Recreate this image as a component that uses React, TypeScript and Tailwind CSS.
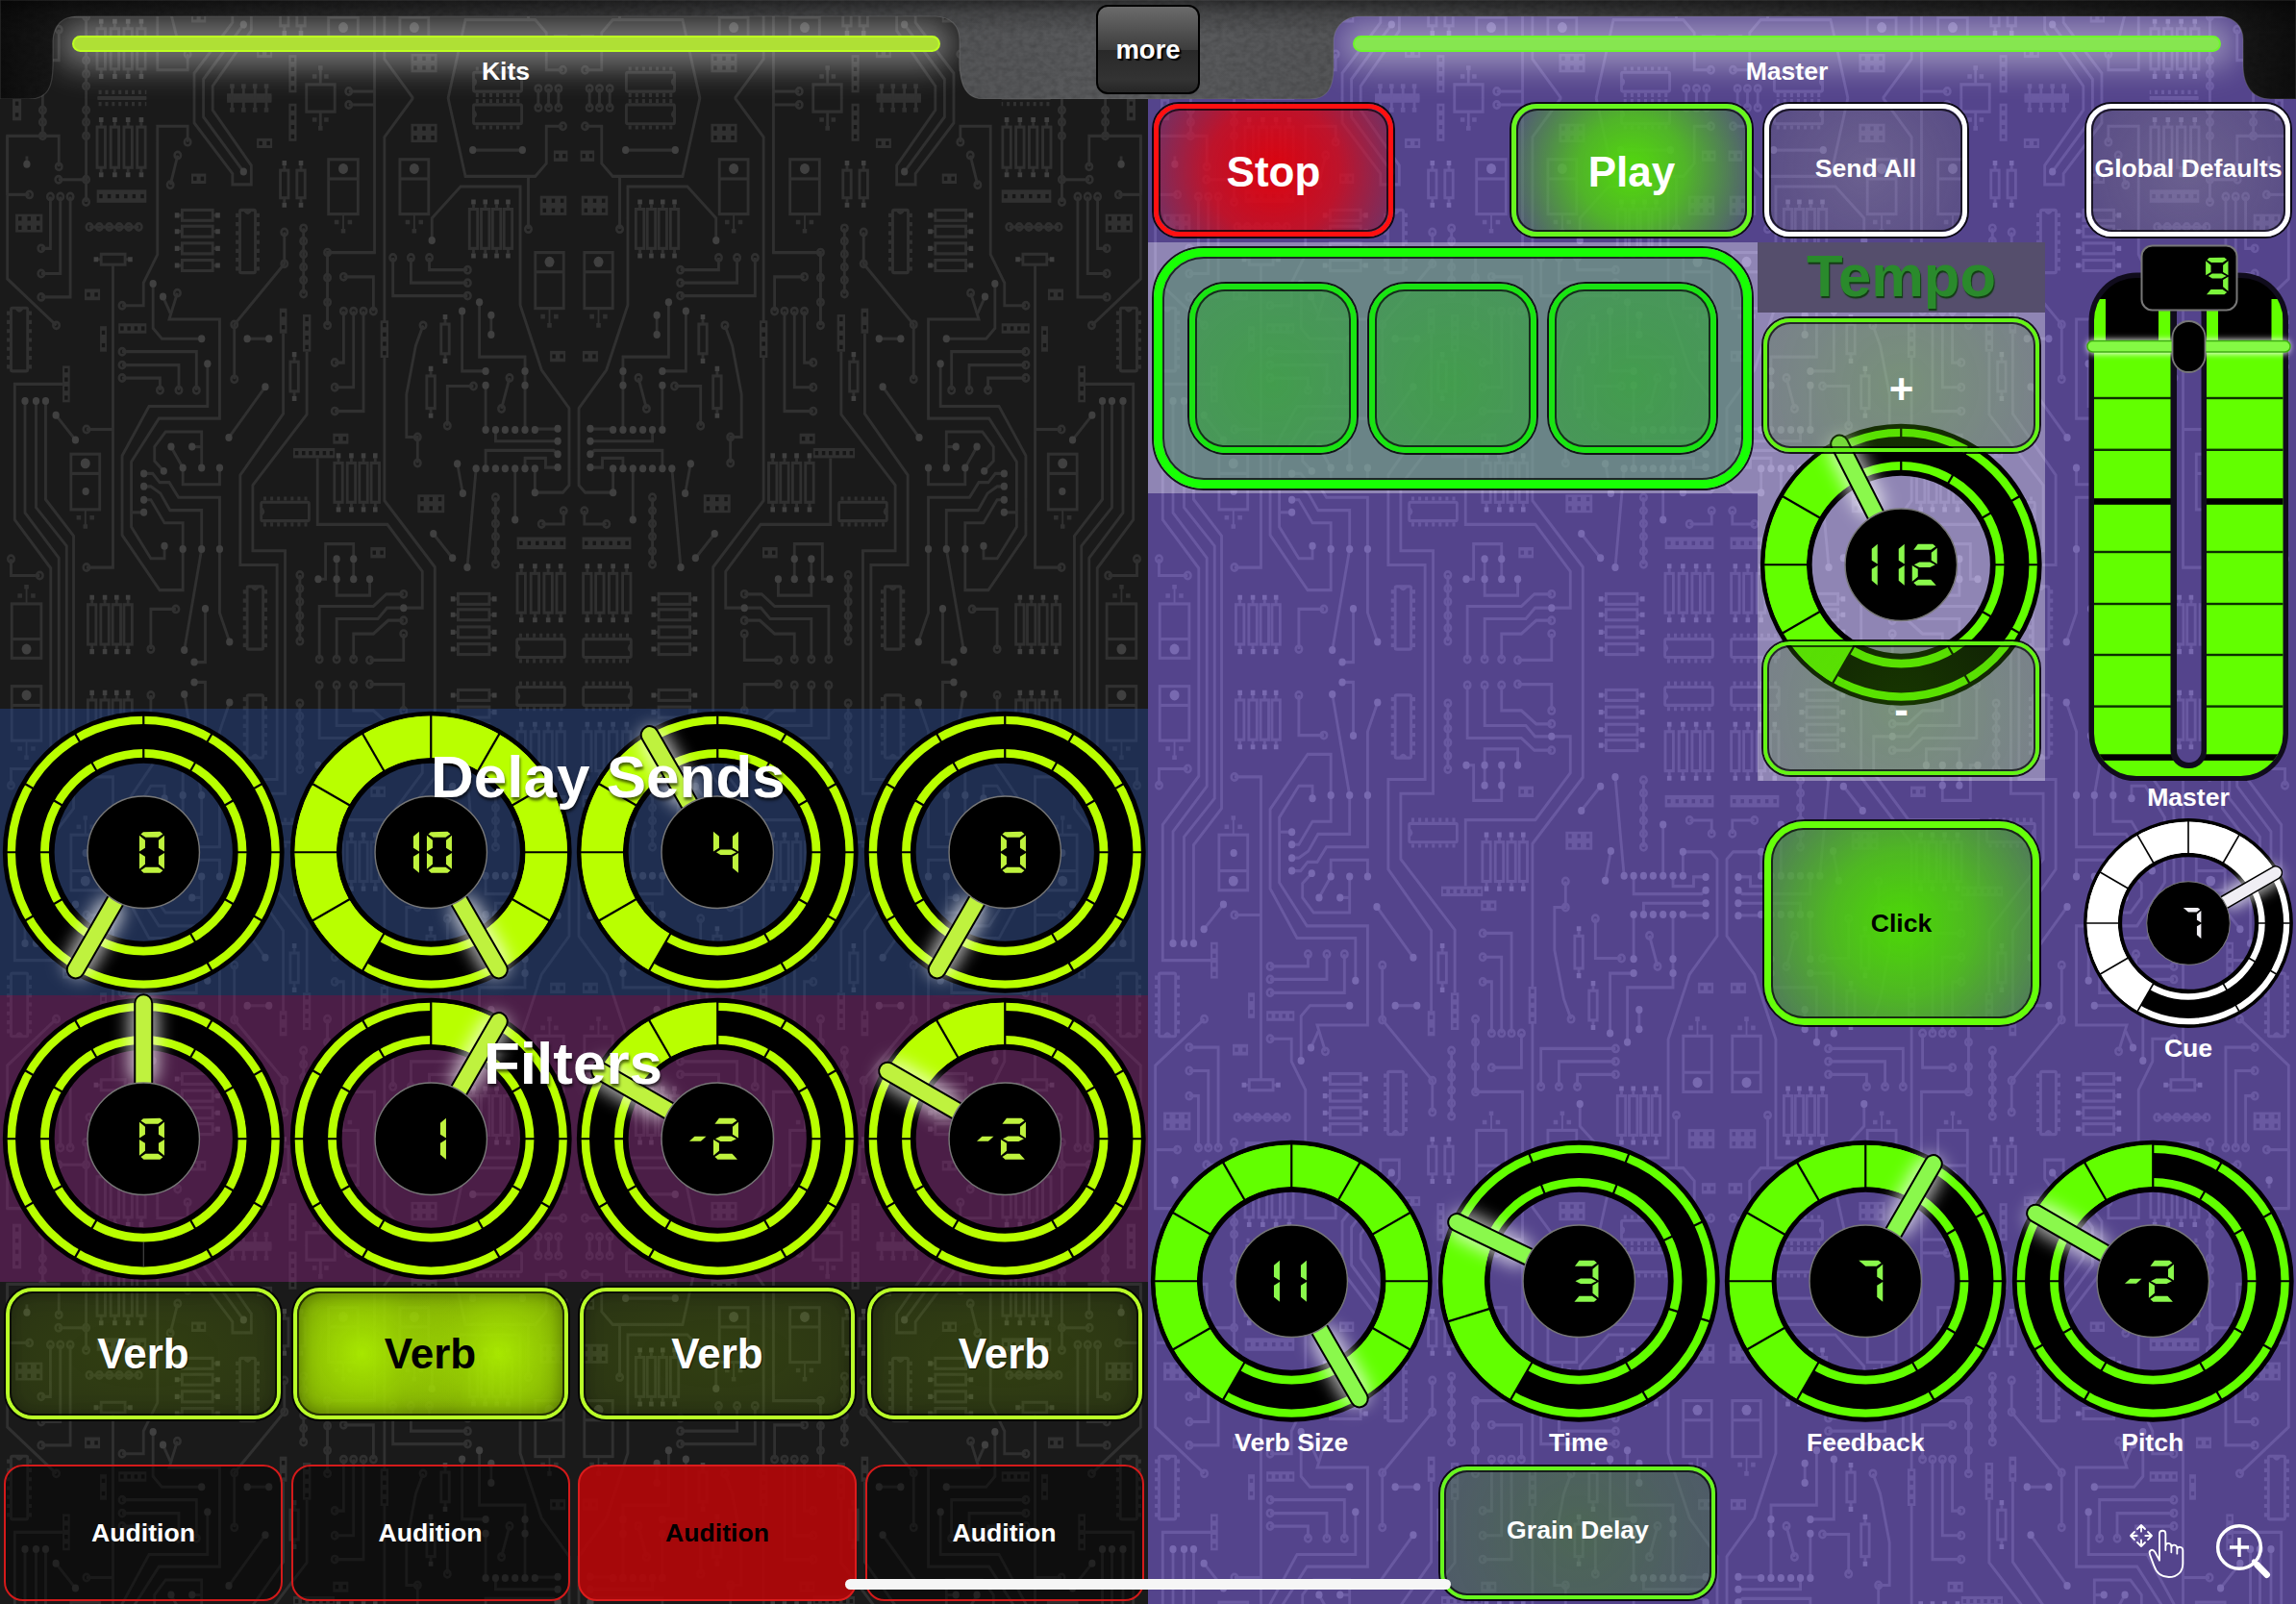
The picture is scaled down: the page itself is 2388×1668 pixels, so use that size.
import React from "react";

const LIME = "#b9ff00";
const GREEN = "#62ff00";

/* ---------- circuit board backdrop ---------- */

const WIRES = [
  "116,28 116,122", "20,267 20,122 160,122 160,198", "20,122 20,475 153,590", "20,267 80,267",
  "73,192 73,172", "234,28 234,285", "159,230 234,230",
  "137,272 137,400 112,400", "164,272 164,462 112,462", "191,272 191,520 112,520", "243,347 377,347",
  "307,440 307,1188 235,1188", "235,847 307,847",
  "510,137 510,98 428,98 428,415 390,485 390,541 332,541", "483,170 463,243",
  "528,28 528,90 632,215 632,242 683,242 683,195 578,58 578,28", "553,28 553,75 662,210",
  "948,45 1018,45", "1018,28 1018,410 890,410 890,590",
  "1123,28 1045,125 1045,1023 1182,1187 1182,1447",
  "1218,28 1265,222 1455,222 1485,190 1485,98 1530,98", "1436,222 1436,352", "1285,157 1420,157",
  "1463,28 1463,52", "1491,28 1491,52", "1518,28 1518,52",
  "1174,380 1174,325 1252,247 1414,247 1414,540 1472,700 1547,795 1547,985 1530,1003 1454,1003 1454,944",
  "773,360 773,438 637,588 637,723", "825,350 825,512",
  "934,470 1015,470 1015,555", "934,555 934,682 910,682", "961,555 961,743 910,743", "988,555 988,802 910,802",
  "1068,423 1068,517 1271,517", "1117,423 1117,485 1271,485", "1167,423 1167,453 1271,453",
  "416,487 416,597 440,623 548,623", "443,519 463,560",
  "482,510 460,575 597,575 597,820 432,820 357,927 357,1088 410,1166 447,1166 447,1135", "357,1052 391,1052",
  "332,655 534,655 534,750", "332,688 486,688 486,750", "332,720 435,720 435,750",
  "564,685 564,790 405,790 332,912 332,1108 434,1244 497,1244 497,1078 447,1078 410,1021 391,1021",
  "672,623 731,623", "770,610 770,808 653,960 653,1182 753,1182 753,1447",
  "834,655 834,810 687,985 687,1147 775,1147 775,1447", "721,742 622,867",
  "170,735 40,735 40,1070 138,1190 138,1447", "68,777 68,1053 160,1165 160,1447",
  "98,777 98,1040 181,1135 181,1447", "124,777 124,1020 200,1110 200,1447", "152,812 205,873",
  "445,950 420,925 420,890 450,853 548,853 548,942", "465,890 497,942 497,983 597,983 597,942", "522,890 548,890",
  "391,956 415,956 434,978 460,978 485,1015 597,1015 597,1300 624,1372",
  "391,988 410,988 436,1005 462,1047 548,1047 548,1143 501,1392",
  "30,1167 30,1208 108,1208", "478,1291 410,1291 410,1390", "558,1290 558,1422 528,1422", "815,1207 815,1370",
  "863,918 863,1082 1053,1082 1148,1198 1148,1288 1097,1288",
  "865,1217 885,1217 885,1130 961,1130 961,1217", "915,1167 915,1257 1005,1257 1005,1217",
  "868,1415 868,1284 1015,1284 1050,1254 1097,1254", "915,1415 915,1315 1027,1315 1052,1288 1097,1288",
  "961,1415 961,1352 1015,1352 1055,1319 1097,1319", "1005,1417 1097,1417 1097,1352",
  "1150,590 1130,640 1105,760 1105,866 1135,866 1135,930",
  "1256,555 1256,703 1320,703", "1303,533 1303,668 1427,668 1427,848", "1335,565 1335,613", "1320,738 1320,848",
  "1287,740 1216,740 1216,838", "1385,720 1363,796", "1454,846 1516,846", "1347,848 1347,876 1516,876",
  "1320,942 1320,899 1505,899 1516,908", "1427,942 1427,918 1483,918 1483,941 1516,941",
  "1294,944 1270,1188", "1400,944 1400,1070", "1243,932 1258,1005", "1178,1105 1230,1165",
  "1347,1015 1347,1180", "1532,1048 1532,1081 1472,1081",
];

const RINGS = `116,58 116,88 116,122 160,198 153,590 80,267 234,58 234,88 234,122 159,230 234,230 234,285
137,272 164,272 191,272 112,400 112,462 112,520 243,347 270,347 297,347 324,347 350,347 377,347
235,847 235,1188 332,541 510,137 483,170 463,243 948,45 890,410 890,472 890,533 890,590 1530,98 1436,352
1463,52 1491,52 1518,52 773,360 773,438 637,588 637,723 825,350 825,382 825,414 825,446 825,478 825,512
934,470 1015,555 934,555 961,555 988,555 910,682 910,743 910,802 1068,423 1117,423 1167,423 1271,453 1271,485 1271,517
482,510 332,655 332,688 332,720 435,750 486,750 534,750 30,1167 108,1208 478,1291 410,1390
815,1207 815,1240 815,1273 815,1307 815,1338 815,1370 1097,1254 1097,1319 1097,1352 868,1415 915,1415 961,1415 1005,1417
1150,590 1135,866 1135,930 1287,740 1216,838 1385,720 1363,796 1347,1015 1347,1048 1347,1080 1347,1112 1347,1148 1347,1180
1532,1048 1472,1081`.split(/\s+/);

const DOTS = `73,192 662,210 1285,157 1420,157 1174,380 416,487 443,519 548,623 564,685 672,623 731,623 721,742 622,867
68,777 98,777 124,777 152,812 205,873 233,1000 465,890 522,890 445,950 497,942 548,942 597,942 391,956 391,988 391,1021 391,1052
447,1135 497,1143 548,1143 597,1143 624,1372 501,1392 558,1290 528,1422 915,1167 961,1167 865,1217 915,1217 961,1217 1005,1217 1097,1288
1256,555 1303,533 1335,565 1335,613 1320,703 1427,703 1320,738 1427,738 1320,848 1347,848 1373,848 1400,848 1427,848 1454,848
1516,845 1516,876 1516,908 1516,941 1294,944 1320,944 1347,944 1373,944 1400,944 1427,944 1454,944 1454,1003 1400,1070
1243,932 1258,1005 1270,1188 1178,1105 1230,1165`.split(/\s+/);

/* x, y, w, h, holes per row, rows */
const HEADERS = [
  [263, 255, 135, 32, 6, 1], [42, 315, 74, 45, 3, 2], [230, 500, 42, 28, 2, 1], [272, 592, 18, 63, 1, 2],
  [322, 585, 76, 25, 4, 1], [520, 215, 40, 25, 2, 1], [785, 42, 21, 93, 1, 4], [698, 128, 42, 24, 2, 1],
  [1117, 92, 71, 46, 3, 2], [1505, 158, 38, 27, 2, 1], [1468, 270, 72, 48, 3, 2], [760, 548, 20, 62, 1, 2],
  [823, 563, 22, 92, 1, 4], [170, 690, 20, 90, 1, 4], [797, 893, 113, 25, 6, 1], [905, 857, 42, 26, 2, 1],
  [1007, 1138, 41, 27, 2, 1], [1034, 578, 22, 92, 1, 4], [1135, 1008, 73, 45, 3, 2], [1405, 1113, 133, 30, 6, 1],
  [1495, 653, 42, 27, 2, 1], [34, 28, 24, 56, 1, 2],
];

/* vertical resistors: centre x, top, bottom, half width */
const VRES = [
  ...[275, 312, 348, 384].map((x) => [x, 100, 200, 11]),
  ...[1287, 1319, 1350, 1381].map((x) => [x, 303, 400, 11]),
  ...[250, 285, 317, 348].map((x) => [x, 1280, 1378, 11]),
  ...[920, 955, 988, 1020].map((x) => [x, 930, 1027, 11]),
  ...[1417, 1454, 1490, 1524].map((x) => [x, 1203, 1300, 11]),
  [773, 207, 275, 11], [818, 207, 275, 11], [800, 680, 753, 11], [1210, 587, 660, 11], [1171, 715, 795, 11],
];

/* horizontal resistors: left, right, centre y */
const HRES = [
  ...[318, 358, 400, 442].map((y) => [495, 578, y]),
  ...[1266, 1305, 1348, 1390].map((y) => [1245, 1330, y]),
  [275, 340, 427],
];

/* chips: x, y, w, h, vertical? */
const CHIPS: [number, number, number, number, boolean][] = [
  [30, 547, 45, 156, true], [652, 305, 42, 155, true], [672, 1235, 43, 155, true],
  [1287, 45, 131, 47, false], [710, 1027, 130, 46, false], [1405, 1365, 130, 45, false],
];

/* transistors: x, y, w, h, legs up? */
const TRANSISTORS: [number, number, number, number, boolean][] = [
  [893, 180, 80, 135, false], [1087, 180, 78, 135, false], [1455, 410, 77, 138, false],
  [193, 908, 78, 137, false], [32, 1278, 80, 134, true],
];

function Quadrant({ board, pin }: { board: string; pin: string }) {
  return (
    <g transform="translate(0 -12) scale(.38265 .42092)" fill="none" stroke="currentColor" strokeWidth="7.5">
      {WIRES.map((p) => <polyline key={p} points={p} />)}
      {RINGS.map((p, i) => {
        const [x, y] = p.split(",").map(Number);
        return <circle key={i} cx={x} cy={y} r="8.5" strokeWidth="6.5" />;
      })}
      {DOTS.map((p, i) => {
        const [x, y] = p.split(",").map(Number);
        return <circle key={i} cx={x} cy={y} r="9.5" fill={pin} stroke="none" />;
      })}
      {HEADERS.map(([x, y, w, h, n, rows], i) => (
        <g key={i}>
          <rect x={x} y={y} width={w} height={h} fill="currentColor" stroke="none" />
          {Array.from({ length: n * rows }, (_, k) => (
            <rect
              key={k}
              x={x + (w * ((k % n) + 0.5)) / n - 4.5}
              y={y + (h * (Math.floor(k / n) + 0.5)) / rows - 5}
              width="9" height="10" fill={board} stroke="none"
            />
          ))}
        </g>
      ))}
      {VRES.map(([x, a, b, r], i) => (
        <g key={i}>
          <rect x={x - r} y={a} width={r * 2} height={b - a} />
          <path d={`M${x} ${a}v-12M${x} ${b}v12`} />
          <path d={`M${x - 6} ${a - 18}h12M${x - 6} ${b + 18}h12`} strokeWidth="12" stroke={pin} />
        </g>
      ))}
      {HRES.map(([a, b, y], i) => (
        <g key={i}>
          <rect x={a} y={y - 13} width={b - a} height="26" />
          <path d={`M${a} ${y}h-12M${b} ${y}h12`} />
          <path d={`M${a - 20} ${y}h12M${b + 8} ${y}h12`} strokeWidth="12" stroke={pin} />
        </g>
      ))}
      {CHIPS.map(([x, y, w, h, vertical], i) => (
        <g key={i}>
          <rect x={x} y={y} width={w} height={h} rx="4" />
          {vertical ? (
            <>
              <path d={`M${x - 7} ${y + 8}V${y + h - 4}M${x + w + 7} ${y + 8}V${y + h - 4}`} strokeDasharray="10 12" strokeWidth="9" />
              <path d={`M${x + w / 2 - 8} ${y}q8 14 16 0`} />
            </>
          ) : (
            <>
              <path d={`M${x + 6} ${y - 9}H${x + w}M${x + 6} ${y + h + 9}H${x + w}`} strokeDasharray="8 10.5" strokeWidth="10" />
              <path d={`M${x} ${y + h / 2 - 8}q12 8 0 16`} />
            </>
          )}
        </g>
      ))}
      {TRANSISTORS.map(([x, y, w, h, up], i) => {
        const c = x + w / 2;
        const line = up ? y + h - 47 : y + 48;
        const hole = up ? y + h - 22 : y + 23;
        const leg = up ? y - 20 : y + h + 20;
        const tip = up ? y - 42 : y + h + 42;
        return (
          <g key={i}>
            <rect x={x} y={y} width={w} height={h} />
            <path d={`M${x} ${line}h${w}`} />
            <circle cx={c} cy={hole} r="13" fill={pin} stroke="none" />
            <path d={`M${c} ${up ? y : y + h}V${tip}`} strokeWidth="5" />
            <path d={`M${c - 24} ${leg}h12M${c + 12} ${leg}h12M${c - 6} ${tip}h12`} strokeWidth="11" />
          </g>
        );
      })}
      {/* parts cut by the top fold line */}
      <path d="M833 28V62H910V28M871 62V100" />
      <path d="M849 82h12M881 82h12M865 103h12" strokeWidth="11" />
      <path d="M265 30H398" strokeWidth="6" />
      <path d="M268 43H398" strokeDasharray="8 10" strokeWidth="10" />
      <path d="M617 30H738" strokeWidth="20" />
      <path d="M631 28V52M662 28V52M693 28V52M724 28V52" />
      <path d="M625 58h12M656 58h12M687 58h12M718 58h12" strokeWidth="11" />
    </g>
  );
}

function Circuit({ id, className, board, pin }: { id: string; className: string; board: string; pin: string }) {
  return (
    <svg className={"absolute inset-0 " + className} width="1194" height="1668" viewBox="0 0 1194 1668">
      <defs>
        <g id={id}><Quadrant board={board} pin={pin} /></g>
      </defs>
      {[102, 1296].map((y) => (
        <g key={y}>
          <use href={"#" + id} transform={`translate(0 ${y})`} />
          <use href={"#" + id} transform={`translate(1194 ${y}) scale(-1 1)`} />
          <use href={"#" + id} transform={`translate(0 ${y}) scale(1 -1)`} />
          <use href={"#" + id} transform={`translate(1194 ${y}) scale(-1 -1)`} />
        </g>
      ))}
    </svg>
  );
}

/* ---------- seven-segment read-out ---------- */

const SEGMENTS: Record<string, string> = {
  "0": "abcdef", "1": "bc", "2": "abged", "3": "abgcd", "4": "fgbc", "7": "abc", "9": "abcdfg", "-": "-",
};

const SHIFT: Record<string, number> = { "1": -6, "7": -3.7, "3": -1.5 };

function Digit({ char, x }: { char: string; x: number }) {
  const on = SEGMENTS[char];
  const has = (s: string) => on.includes(s);
  const top = has("a") ? 4 : 0;
  const bottom = has("d") ? 39 : 43;
  const cl = has("f") ? 2 : 0;
  return (
    <g transform={`translate(${x + (SHIFT[char] ?? 0)} -21.5)`}>
      {has("-") && <polygon points="3,24 8.5,19 20.5,19 15,24" />}
      {has("a") && <polygon points={`${has("f") ? "4,0.5" : char === "7" ? "1,0" : "6,0"} 21.5,0 24.5,2.5 19.5,6 ${has("f") ? "6.5,6 1.5,2.8" : char === "7" ? "8,6" : "1.5,6"}`} />}
      {has("b") && <polygon points={`26,${top} 26,20.8 20,17 20,${top + 5}`} />}
      {has("c") && <polygon points={`26,22.2 26,${bottom} 20,${bottom - 5} 20,26`} />}
      {has("d") && <polygon points={`${has("e") ? "1.5,40.2 6.5,37" : "6,37"} ${has("c") ? "19.5,37 24.5,40.5 21.5,43" : "19.5,37 25,43"} ${has("e") ? "4.5,43" : "1,43"}`} />}
      {has("e") && <polygon points="0,22.2 0,39 6,34 6,26" />}
      {has("f") && <polygon points={`0,${top} 0,20.8 6,17 6,${top + 5}`} />}
      {has("g") && <polygon points={`${2 + cl / 2},21.5 7.5,18.8 18.5,18.8 24,21.5 18.5,24.2 7.5,24.2`} />}
    </g>
  );
}

function Digits({ text, right }: { text: string; right: number }) {
  return (
    <>
      {text.split("").map((c, i) => <Digit key={i} char={c} x={right - 26 - (text.length - 1 - i) * 28} />)}
    </>
  );
}

/* ---------- knob ---------- */

const polar = (deg: number, r: number) => {
  const a = ((deg - 90) * Math.PI) / 180;
  return `${(Math.cos(a) * r).toFixed(2)} ${(Math.sin(a) * r).toFixed(2)}`;
};

type KnobProps = {
  value: string;
  pointer: number;
  from?: number;
  to?: number;
  color: string;
  pointerColor: string;
  steps?: number;
  right?: number;
  bottomMark?: boolean;
  className?: string;
};

function Knob({ value, pointer, from, to, color, pointerColor, steps = 10, right = 21.7, bottomMark, className = "size-[298.5px]" }: KnobProps) {
  const sweep = from !== undefined && to !== undefined ? (to - from + 360) % 360 : 0;
  return (
    <svg viewBox="-149.25 -149.25 298.5 298.5" className={"shrink-0 overflow-visible " + className}>
      <defs>
        <filter id="glow" x="-300%" y="-60%" width="700%" height="220%">
          <feGaussianBlur stdDeviation="9" />
        </filter>
      </defs>
      <circle r="119.5" fill="none" stroke="#000" strokeWidth="53.8" />
      <circle r="137.4" fill="none" stroke={color} strokeWidth="8.4" />
      <circle r="102.8" fill="none" stroke={color} strokeWidth="8.8" />
      {sweep > 0 && (
        <path
          d={`M${polar(from!, 120)}A120 120 0 ${sweep > 180 ? 1 : 0} 1 ${polar(to!, 120)}`}
          fill="none" stroke={color} strokeWidth="43.4"
        />
      )}
      {Array.from({ length: steps + 1 }, (_, i) => 210 + (300 / steps) * i).map((a) => (
        <path key={a} d={`M${polar(a, 97)}L${polar(a, 143)}`} stroke="#000" strokeWidth="2.2" />
      ))}
      {bottomMark && <path d="M0 107V133" stroke="#666" strokeWidth=".8" />}
      <g transform={`rotate(${pointer})`}>
        <rect x="-15" y="-148" width="30" height="92" rx="15" fill="#fff" fillOpacity=".7" filter="url(#glow)" />
        <rect x="-9" y="-150" width="18" height="100" rx="9" fill={pointerColor} stroke="#000" strokeWidth="2" />
      </g>
      <circle r="58.2" fill="#000" stroke="#777" strokeWidth="1.4" />
      <g fill={pointerColor}><Digits text={value} right={right} /></g>
    </svg>
  );
}

/* ---------- pads ---------- */

type PadProps = {
  outer: string;
  ring: string;
  fill: string;
  children?: React.ReactNode;
};

function Pad({ outer, ring, fill, children }: PadProps) {
  return (
    <div className={"flex shrink-0 border-2 border-black/85 " + outer}>
      <div className={"flex flex-1 " + ring}>
        <div className={"flex flex-1 items-center justify-center whitespace-nowrap border-2 border-black/70 text-center " + fill}>{children}</div>
      </div>
    </div>
  );
}

/* ---------- master fader ---------- */

function Fader() {
  const marks = [162, 215.8, 269.5, 322, 376, 429, 482.6, 535.6];
  return (
    <svg width="224" height="560" viewBox="0 0 224 560" className="shrink-0 overflow-visible">
      <defs>
        <clipPath id="body"><rect x="14" y="37" width="196.500" height="518" rx="44" /></clipPath>
        <filter id="lineGlow" x="-10%" y="-200%" width="120%" height="500%"><feGaussianBlur stdDeviation="3" /></filter>
        <mask id="slot">
          <rect width="224" height="560" fill="#fff" />
          <rect x="100" y="60" width="25.500" height="481" rx="12.700" fill="#000" />
        </mask>
      </defs>
      <g mask="url(#slot)">
        <rect x="8.500" y="31.500" width="207.500" height="529" rx="50" fill="#100c1c" />
        <g clipPath="url(#body)">
          <rect x="14" y="36" width="197" height="75" fill="#000" />
          <rect x="14" y="59" width="12" height="52" fill={GREEN} />
          <rect x="81" y="59" width="12.500" height="52" fill={GREEN} />
          <rect x="131" y="59" width="12" height="52" fill={GREEN} />
          <rect x="198.500" y="59" width="12" height="52" fill={GREEN} />
          <rect x="14" y="109" width="197" height="447" fill={GREEN} />
          {marks.map((y, i) => (
            <rect key={y} x="14" y={i === 3 - 1 || i === 7 ? y - 3.3 : y - 1.2} width="197" height={i === 2 || i === 7 ? 6.6 : 2.4} fill={i === 2 || i === 7 ? "#000" : "#0c3000"} />
          ))}
        </g>
        <rect x="93.500" y="50" width="37.500" height="497" rx="18" fill="#100c1c" />
      </g>
      <rect x="7" y="101" width="211" height="15" rx="6" fill="#fff" fillOpacity=".9" filter="url(#lineGlow)" />
      <rect x="7" y="102.500" width="211" height="11.500" rx="5.500" fill="#84f944" stroke="#3fae10" strokeWidth="1.500" />
      <rect x="95.500" y="82" width="34" height="53" rx="17" fill="#000" stroke="#777" strokeWidth="1.800" />
      <rect x="63.500" y="3.500" width="99" height="67" rx="11" fill="#000" stroke="#777" strokeWidth="2" />
      <g fill="#7df53c" transform="translate(153.500 35) scale(.9)"><Digits text="9" right={0} /></g>
    </svg>
  );
}

/* ---------- header ---------- */

function HeaderPlate() {
  const shape =
    "M0 0H2388V103H2362C2342 103 2333 88 2333 68V41C2333 26 2322 17 2308 17H1414C1399 17 1388 27 1387 42V70C1387 92 1380 103 1362 103H1024C1004 103 999 88 998 68V42C998 26 988 17 972 17H80C65 17 56 26 55 42V68C55 90 50 103 30 103H0Z";
  return (
    <svg className="absolute left-0 top-0" width="2388" height="103" viewBox="0 0 2388 103">
      <defs>
        <linearGradient id="plate">
          <stop offset="0" stopColor="#0d0d0d" />
          <stop offset=".03" stopColor="#191919" />
          <stop offset=".25" stopColor="#3a3a3b" />
          <stop offset=".42" stopColor="#545557" />
          <stop offset=".5" stopColor="#5a5b5d" />
          <stop offset=".58" stopColor="#545557" />
          <stop offset=".75" stopColor="#3a3a3b" />
          <stop offset=".97" stopColor="#191919" />
          <stop offset="1" stopColor="#0d0d0d" />
        </linearGradient>
        <linearGradient id="plateTop" x2="0" y2="1">
          <stop offset="0" stopColor="#000" stopOpacity=".5" />
          <stop offset=".13" stopColor="#000" stopOpacity=".2" />
          <stop offset=".35" stopColor="#000" stopOpacity="0" />
        </linearGradient>
        <filter id="grain" x="0" y="0" width="100%" height="100%">
          <feTurbulence type="fractalNoise" baseFrequency=".14 .2" numOctaves="2" seed="4" />
          <feColorMatrix values="0 0 0 0 0  0 0 0 0 0  0 0 0 0 0  1 0 0 0 -.35" />
        </filter>
        <clipPath id="plateClip"><path d={shape} /></clipPath>
      </defs>
      <path d={shape} fill="url(#plate)" />
      <g clipPath="url(#plateClip)">
        <rect width="2388" height="103" filter="url(#grain)" opacity=".28" />
        <rect width="2388" height="103" fill="url(#plateTop)" />
      </g>
      <path d={shape} fill="none" stroke="#8a8a8a" strokeOpacity=".3" strokeWidth="1.200" />
    </svg>
  );
}

function Tab({ label, bar, className }: { label: string; bar: string; className: string }) {
  return (
    <div className={"relative flex h-[103px] shrink-0 flex-col items-center pt-[37px] " + className}>
      <div className={"h-[17px] w-[903px] rounded-full border-2 shadow-[0_0_34px_15px_rgba(255,255,255,0.42)] " + bar} />
      <div className="mt-[5px] text-[26.600px] leading-[30px]">{label}</div>
    </div>
  );
}

/* ---------- left page ---------- */

const limeKnob = { color: LIME, pointerColor: "#bff23e" };
const greenKnob = { color: GREEN, pointerColor: "#8af84c" };

function KitsPage() {
  return (
    <section className="relative flex h-[1668px] w-[1194px] flex-col overflow-hidden bg-[#1a1a1a]">
      <Circuit id="kits-board" className="text-[#303030]" board="#161616" pin="#404040" />
      <Tab label="Kits" bar="border-[#bdff22] bg-[#afe035]" className="mr-[142px]" />
      <div className="relative mt-[634px] flex h-[298px] shrink-0 items-center bg-[rgba(40,75,158,0.41)]">
        <Knob value="0" pointer={210} {...limeKnob} />
        <Knob value="10" pointer={150} from={210} to={150} {...limeKnob} />
        <Knob value="4" pointer={330} from={210} to={330} {...limeKnob} />
        <Knob value="0" pointer={210} {...limeKnob} />
        <h2 className="absolute left-[448px] top-[36px] whitespace-nowrap text-[62px] leading-[70px] [text-shadow:1px_3px_3px_rgba(0,0,0,0.6)]">Delay Sends</h2>
      </div>
      <div className="relative flex h-[298px] shrink-0 items-center bg-[rgba(150,38,140,0.4)]">
        <Knob value="0" pointer={0} bottomMark {...limeKnob} />
        <Knob value="1" pointer={30} from={0} to={30} {...limeKnob} />
        <Knob value="-2" pointer={300} from={300} to={0} {...limeKnob} />
        <Knob value="-2" pointer={300} from={300} to={0} {...limeKnob} />
        <h2 className="absolute left-[503px] top-[36px] whitespace-nowrap text-[62px] leading-[70px] [text-shadow:1px_3px_3px_rgba(0,0,0,0.6)]">Filters</h2>
      </div>
      <div className="relative mt-[4px] flex shrink-0 gap-[8.500px] pl-[4px]">
        {[false, true, false, false].map((on, i) => (
          <Pad
            key={i}
            outer="h-[141px] w-[290px] rounded-[30px] text-[44px]"
            ring="rounded-[28px] border-[4.500px] border-[#b9ff28]"
            fill={
              on
                ? "rounded-[24px] bg-[radial-gradient(circle_at_24%_50%,rgba(170,235,0,0.95),transparent_50%),radial-gradient(circle_at_76%_50%,rgba(170,235,0,0.95),transparent_50%),linear-gradient(rgba(150,200,0,0.75),rgba(150,200,0,0.75))] text-black shadow-[inset_0_0_18px_rgba(40,60,0,0.55)]"
                : "rounded-[24px] bg-[radial-gradient(ellipse_at_50%_50%,rgba(105,150,0,0.3),rgba(105,150,0,0.22))] shadow-[inset_0_0_18px_rgba(0,0,0,0.3)] [text-shadow:1px_1px_1px_rgba(0,0,0,0.6)]"
            }
          >
            Verb
          </Pad>
        ))}
      </div>
      <div className="relative mt-[45px] flex shrink-0 gap-[8.500px] pl-[4px]">
        {[false, false, true, false].map((on, i) => (
          <div
            key={i}
            className={
              "flex h-[142px] w-[290px] items-center justify-center rounded-[20px] border-[2.500px] pt-[2px] text-[26.600px] " +
              (on ? "border-[#dc1c1c] bg-[rgba(178,8,10,0.93)] text-black" : "border-[#d41a1a] bg-black/45")
            }
          >
            Audition
          </div>
        ))}
      </div>
    </section>
  );
}

/* ---------- right page ---------- */

function TempoPanel() {
  return (
    <div className="relative flex h-[560px] w-[299px] shrink-0 flex-col items-center bg-white/35">
      <div className="w-full bg-[#554e6c]">
        <div className="h-[73px] text-center text-[61.500px] leading-[69px] text-[#2a8a2c] [text-shadow:1px_2px_1px_#133c14]">Tempo</div>
      </div>
      <div className="absolute left-0 top-[186px]">
        <Knob value="112" pointer={333} from={210} to={332} right={37.5} {...greenKnob} />
      </div>
      <Pad
        outer="relative mt-[4px] h-[143px] w-[291px] rounded-[30px] text-[44px]"
        ring="rounded-[28px] border-[4.500px] border-[#64f414]"
        fill="rounded-[24px] bg-[radial-gradient(circle_at_50%_50%,rgba(72,170,0,0.32),rgba(60,120,20,0.26))] pt-[9px]"
      >
        +
      </Pad>
      <Pad
        outer="relative mt-[193px] h-[143px] w-[291px] rounded-[30px] text-[44px]"
        ring="rounded-[28px] border-[4.500px] border-[#64f414]"
        fill="rounded-[24px] bg-[radial-gradient(circle_at_50%_50%,rgba(72,170,0,0.32),rgba(60,120,20,0.26))] pt-[3px]"
      >
        -
      </Pad>
    </div>
  );
}

function ToolIcons() {
  return (
    <svg className="absolute bottom-0 right-0" width="198" height="108" viewBox="0 0 594 324" fill="none" stroke="#fff" strokeLinecap="round" strokeLinejoin="round">
      <g strokeWidth="5.500">
        <path d="M111 98V78M99 90l12-12 12 12M111 124v20M99 132l12 12 12-12M98 111H78M90 99l-12 12 12 12M124 111h20M132 99l12 12-12 12" />
        <path d="M168 188V105c0-13 19-13 19 0v51M187 144c2-13 18-12 18 2v17M205 148c2-12 18-10 18 3v16M223 153c2-10 18-9 18 4v40c0 26-17 43-44 43-25 0-39-14-46-35l-13-35c-5-14 8-20 16-8l14 26" />
      </g>
      <circle cx="417" cy="147" r="67" strokeWidth="10.500" />
      <path d="M387 147h60M417 117v60" strokeWidth="10.500" strokeLinecap="butt" />
      <path d="M462 191l12 12" strokeWidth="13" />
      <path d="M473 202l30 31" strokeWidth="20" />
    </svg>
  );
}

function MasterPage() {
  const pad = "h-[142px] rounded-[28px]";
  const labelled = "w-[298.500px] text-center text-[26.600px] leading-[30px]";
  return (
    <section className="relative flex h-[1668px] w-[1194px] flex-col overflow-hidden bg-[#54448c]">
      <Circuit id="master-board" className="text-[#6959a1]" board="#54448c" pin="#7869b0" />
      <Tab label="Master" bar="border-[#6ef52c] bg-[#86e650]" className="ml-[135px]" />
      <div className="relative flex h-[149px] shrink-0 pl-[4px] pt-[3px]">
        <Pad outer={pad + " w-[253px] text-[44px]"} ring="rounded-[26px] border-[5px] border-[#ff1010]" fill="rounded-[22px] bg-[radial-gradient(circle_at_50%_50%,rgba(222,2,12,0.97)_5%,rgba(215,8,20,0.8)_52%,rgba(160,25,50,0.5)_95%)] pt-[3px]">Stop</Pad>
        <Pad outer={pad + " ml-[119px] w-[254px] text-[44px]"} ring="rounded-[26px] border-[5px] border-[#68f61e]" fill="rounded-[22px] bg-[radial-gradient(circle_at_50%_50%,rgba(82,216,12,0.97)_8%,rgba(80,200,24,0.85)_42%,rgba(80,130,80,0.42)_95%)] pt-[3px]">Play</Pad>
        <Pad outer={pad + " ml-[9px] w-[215px] text-[26.600px]"} ring="rounded-[26px] border-[5px] border-white" fill="rounded-[22px] bg-[radial-gradient(circle_at_50%_50%,rgba(150,150,150,0.35),rgba(110,110,110,0.22))] pb-[3px]">Send All</Pad>
        <Pad outer={pad + " ml-[120px] w-[216px] text-[26.600px]"} ring="rounded-[26px] border-[5px] border-white" fill="rounded-[22px] bg-[radial-gradient(circle_at_50%_50%,rgba(150,150,150,0.35),rgba(110,110,110,0.22))] pb-[3px]">Global Defaults</Pad>
      </div>

      <div className="relative flex h-[931px] shrink-0">
        <div className="h-[261px] w-[634px] shrink-0 bg-white/35 px-[4px] pt-[4px]">
          <Pad outer="h-[254px] w-[626px] rounded-[54px]" ring="rounded-[52px] border-[9.500px] border-[#18ff04]" fill="gap-[9px] rounded-[43px] bg-[rgba(70,132,90,0.5)]">
            {[0, 1, 2].map((i) => (
              <Pad
                key={i}
                outer="h-[180px] w-[178px] rounded-[40px]"
                ring="rounded-[38px] border-[6.500px] border-[#19e412]"
                fill="rounded-[31px] bg-[radial-gradient(circle_at_50%_60%,rgba(48,168,50,0.68),rgba(54,160,66,0.6))]"
              />
            ))}
          </Pad>
        </div>
        <div className="flex w-[299px] shrink-0 flex-col items-center">
          <TempoPanel />
          <Pad outer="mt-[40px] h-[216px] w-[290px] rounded-[44px] text-[26.600px] text-black" ring="rounded-[42px] border-[7.500px] border-[#66ff0a]" fill="rounded-[34px] bg-[radial-gradient(circle_at_50%_50%,rgba(76,218,4,0.97)_5%,rgba(78,200,20,0.88)_45%,rgba(80,140,75,0.7)_100%)] pt-[2px]">Click</Pad>
        </div>
        <div className="ml-[37px] flex w-[224px] shrink-0 flex-col items-center text-[26.600px] leading-[30px]">
          <Fader />
          <div className="mb-[5px] mt-[2px]">Master</div>
          <Knob value="7" pointer={60} from={210} to={60} color="#ffffff" pointerColor="#f0eef4" className="size-[222px]" />
          <div className="mt-[4px]">Cue</div>
        </div>
      </div>

      <div className="relative flex h-[302px] shrink-0">
        <Knob value="11" pointer={150} from={210} to={150} {...greenKnob} />
        <Knob value="3" pointer={295.7} from={210} to={295.7} steps={7} {...greenKnob} />
        <Knob value="7" pointer={30} from={210} to={30} {...greenKnob} />
        <Knob value="-2" pointer={300} from={300} to={0} {...greenKnob} />
      </div>
      <div className="relative flex shrink-0">
        <div className={labelled}>Verb Size</div>
        <div className={labelled}>Time</div>
        <div className={labelled}>Feedback</div>
        <div className={labelled}>Pitch</div>
      </div>
      <div className="relative mt-[8px] flex shrink-0 pl-[302px]">
        <Pad outer="h-[142px] w-[290px] rounded-[30px] text-[26.600px]" ring="rounded-[28px] border-[4.500px] border-[#68f61e]" fill="rounded-[24px] bg-[radial-gradient(circle_at_50%_50%,rgba(72,125,50,0.6),rgba(74,115,70,0.5))] pb-[4px]">Grain Delay</Pad>
      </div>
      <ToolIcons />
    </section>
  );
}

export default function App() {
  return (
    <main className="relative flex h-[1668px] w-[2388px] overflow-hidden font-['Liberation_Sans',Arial,sans-serif] font-bold text-white">
      <KitsPage />
      <MasterPage />
      <HeaderPlate />
      <button className="absolute left-[1140px] top-[5px] flex h-[93px] w-[108px] items-center justify-center rounded-[12px] border-2 border-black bg-[linear-gradient(#6b6b6b,#3d3d3d_50%,#292929_51%,#333333_85%,#262626)] pt-[1px] text-[27.500px] [text-shadow:2px_2px_1px_#000]">
        more
      </button>
      <div className="absolute bottom-[15px] left-[879px] h-[11px] w-[630px] rounded-full bg-[#f6f6f6]" />
    </main>
  );
}
